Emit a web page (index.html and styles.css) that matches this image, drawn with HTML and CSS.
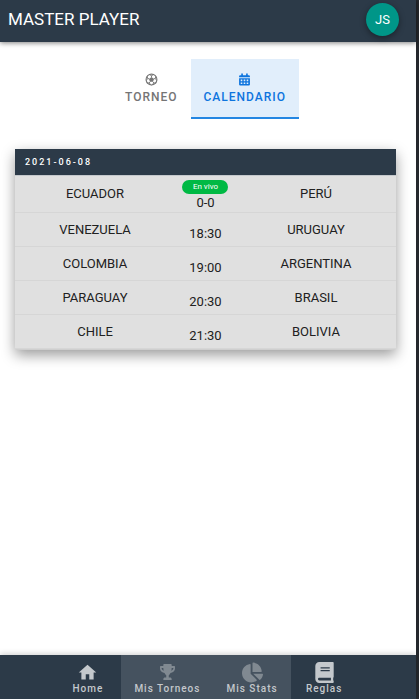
FILE: index.html
```html
<!DOCTYPE html>
<html lang="es">
<head>
<meta charset="utf-8">
<meta name="viewport" content="width=device-width, initial-scale=1">
<title>Master Player</title>
<link rel="stylesheet" href="styles.css">
</head>
<body>
<div class="app">
  <header class="topbar">
    <h1 class="brand">MASTER PLAYER</h1>
    <button class="avatar" type="button">JS</button>
  </header>
  <main class="content">
    <nav class="tabs">
      <a class="tab" href="#torneo">
        <svg class="tab-icon" viewBox="0 0 24 24" aria-hidden="true">
          <circle cx="12" cy="12" r="10" fill="none" stroke="currentColor" stroke-width="2"/>
          <path fill="currentColor" d="M12 7.500l4.600 3.400-1.800 5.400H9.200l-1.800-5.400z"/>
          <path fill="none" stroke="currentColor" stroke-width="1.700" d="M12 8V5M8 2.800L12 5l4-2.200M16 11l3-1M21.700 14L19 10l1-4M14.500 16l2 2.500M12.500 22l4-3.500 4.500-.5M9.500 16l-2 2.500M11.500 22l-4-3.500-4.500-.5M8 11l-3-1M2.300 14L5 10 4 6"/>
        </svg>
        <span>TORNEO</span>
      </a>
      <a class="tab active" href="#calendario">
        <svg class="tab-icon" viewBox="0 0 24 24" aria-hidden="true">
          <path fill="currentColor" fill-rule="evenodd" d="M6 1h3v3h6V1h3v3h2q2 0 2 2v2H2V6q0-2 2-2h2zM2 9.500h20V21q0 2-2 2H4q-2 0-2-2zM5 12v3h3v-3zM10.500 12v3h3v-3zM16 12v3h3v-3zM5 17.500v3h3v-3zM10.500 17.500v3h3v-3zM16 17.500v3h3v-3z"/>
        </svg>
        <span>CALENDARIO</span>
      </a>
    </nav>
    <table class="matches">
      <colgroup><col class="col-team"><col class="col-score"><col class="col-team"></colgroup>
      <thead>
        <tr><th colspan="3">2021-06-08</th></tr>
      </thead>
      <tbody>
        <tr><td>ECUADOR</td><td class="score live"><span class="badge">En vivo</span>0-0</td><td>PERÚ</td></tr>
        <tr><td>VENEZUELA</td><td class="score">18:30</td><td>URUGUAY</td></tr>
        <tr><td>COLOMBIA</td><td class="score">19:00</td><td>ARGENTINA</td></tr>
        <tr><td>PARAGUAY</td><td class="score">20:30</td><td>BRASIL</td></tr>
        <tr><td>CHILE</td><td class="score">21:30</td><td>BOLIVIA</td></tr>
      </tbody>
    </table>
  </main>
  <nav class="bottombar">
    <a class="item" href="#home">
      <svg class="item-icon" viewBox="0 0 24 24" aria-hidden="true"><path d="M10 20v-6h4v6h5v-8h3L12 3 2 12h3v8z"/></svg>
      <span>Home</span>
    </a>
    <a class="item muted" href="#torneos">
      <svg class="item-icon small" viewBox="0 0 576 512" preserveAspectRatio="none" aria-hidden="true"><path d="M552 64H448V24c0-13.300-10.700-24-24-24H152c-13.300 0-24 10.700-24 24v40H24C10.700 64 0 74.700 0 88v56c0 35.700 22.500 72.400 61.900 100.700 31.500 22.700 69.800 37.100 110 41.700C203.300 338.500 240 360 240 360v72h-48c-35.300 0-64 20.700-64 56v12c0 6.600 5.400 12 12 12h296c6.600 0 12-5.400 12-12v-12c0-35.300-28.700-56-64-56h-48v-72s36.700-21.500 68.100-73.600c40.300-4.600 78.600-19 110-41.700 39.300-28.300 61.900-65 61.900-100.700V88c0-13.300-10.700-24-24-24zM99.300 192.800C74.900 175.200 64 155.600 64 144v-16h64.200c1 32.600 5.800 61.200 12.800 86.200-15.100-5.200-29.200-12.400-41.700-21.400zM512 144c0 16.100-17.700 36.100-35.300 48.800-12.500 9-26.700 16.200-41.800 21.400 7-25 11.800-53.600 12.800-86.200H512v16z"/></svg>
      <span>Mis Torneos</span>
    </a>
    <a class="item muted" href="#stats">
      <svg class="item-icon" viewBox="0 0 544 512" aria-hidden="true"><path d="M527.790 288H290.500l158.030 158.030c6.040 6.040 15.980 6.530 22.190.68 38.700-36.460 65.320-85.610 73.130-140.860 1.340-9.460-6.510-17.850-16.060-17.850zm-15.830-64.800C503.720 103.740 408.260 8.280 288.800.04 279.680-.59 272 7.100 272 16.240V240h223.770c9.140 0 16.820-7.680 16.190-16.800zM224 288V50.710c0-9.550-8.390-17.400-17.840-16.060C86.990 51.490-4.100 155.600.14 280.370 4.500 408.510 114.830 513.590 243.030 511.980c50.400-.63 96.970-16.870 135.260-44.030 7.900-5.600 8.420-17.230 1.570-24.080L224 288z"/></svg>
      <span>Mis Stats</span>
    </a>
    <a class="item" href="#reglas">
      <svg class="item-icon" viewBox="0 0 448 512" aria-hidden="true"><path d="M448 360V24c0-13.300-10.700-24-24-24H96C43 0 0 43 0 96v320c0 53 43 96 96 96h328c13.300 0 24-10.700 24-24v-16c0-7.500-3.500-14.300-8.900-18.700-4.200-15.400-4.200-59.300 0-74.700 5.400-4.300 8.900-11.100 8.900-18.600zM128 134c0-3.300 2.700-6 6-6h212c3.300 0 6 2.700 6 6v20c0 3.300-2.700 6-6 6H134c-3.300 0-6-2.700-6-6zm0 64c0-3.300 2.700-6 6-6h212c3.300 0 6 2.700 6 6v20c0 3.300-2.700 6-6 6H134c-3.300 0-6-2.700-6-6zm253.400 250H96c-17.700 0-32-14.300-32-32 0-17.600 14.400-32 32-32h285.400c-1.900 17.100-1.900 46.900 0 64z"/></svg>
      <span>Reglas</span>
    </a>
  </nav>
</div>
</body>
</html>
```

FILE: styles.css
```css
* { box-sizing: border-box; }

body {
  margin: 0;
  font-family: Roboto, "Liberation Sans", sans-serif;
  color: #212121;
}

.app {
  display: flex;
  flex-direction: column;
  min-height: 100vh;
  border-right: 3px solid #25282d;
  background: #fff;
}

.topbar {
  display: flex;
  align-items: center;
  justify-content: space-between;
  height: 42px;
  padding: 0 17px 4px 8px;
  background: #2c3a48;
  box-shadow: 0 1px 5px rgba(0, 0, 0, .5);
}

.brand {
  margin: 0;
  font-size: 17px;
  font-weight: 400;
  color: #fff;
}

.avatar {
  width: 33px;
  height: 33px;
  padding: 0;
  border: 0;
  border-radius: 50%;
  background: #009688;
  color: #fff;
  font: 400 13px Roboto, sans-serif;
  box-shadow: 0 2px 6px rgba(0, 0, 0, .4);
}

.content {
  flex: 1;
  padding: 17px 20px 20px 15px;
}

.tabs {
  display: flex;
  justify-content: center;
  margin-bottom: 30px;
}

.tab {
  display: flex;
  flex-direction: column;
  align-items: center;
  gap: 3px;
  height: 60px;
  padding: 14px 13px 0;
  border-bottom: 2px solid transparent;
  color: #757575;
  font-size: 12px;
  font-weight: 500;
  line-height: 16px;
  letter-spacing: 1px;
  text-decoration: none;
}

.tab.active {
  background: #e1eefb;
  border-color: #2386e2;
  color: #0d74de;
}

.tab-icon {
  width: 13px;
  height: 13px;
}

.matches {
  width: 100%;
  table-layout: fixed;
  border-collapse: separate;
  border-spacing: 0;
  border-bottom: 1px solid #cfcfcf;
  background: #e0e0e0;
  border-radius: 2px;
  box-shadow: 0 5px 14px rgba(0, 0, 0, .4);
}

.col-team { width: 42%; }

.col-score { width: 16%; }

.matches th {
  height: 27px;
  padding: 0 10px;
  border-bottom: 1px solid #c4c8cc;
  background: #2c3a48;
  color: #fff;
  font-size: 9px;
  font-weight: 500;
  letter-spacing: 2px;
  text-align: left;
}

.matches td {
  height: 34px;
  padding: 0;
  border-bottom: 1px solid #d6d6d6;
  font-size: 13px;
  line-height: 16px;
  text-align: center;
}

.matches .score {
  padding-top: 8px;
}

.matches .live {
  height: 37px;
  padding-top: 2px;
}

.badge {
  display: block;
  width: 46px;
  margin: 0 auto 1px;
  border-radius: 7px;
  background: #00b944;
  color: #fff;
  font-size: 8px;
  line-height: 14px;
}

.bottombar {
  display: flex;
  justify-content: center;
  height: 44px;
  padding-right: 4px;
  background: #2c3a48;
  box-shadow: 0 -1px 6px rgba(0, 0, 0, .2);
}

.item {
  display: flex;
  flex-direction: column;
  align-items: center;
  justify-content: flex-end;
  min-width: 67px;
  padding: 0 13px 4px;
  color: #c4c8cc;
  font-size: 10px;
  font-weight: 500;
  line-height: 12px;
  letter-spacing: 1px;
  text-decoration: none;
}

.item.muted {
  background: #45525f;
}

.item-icon {
  width: 21px;
  height: 21px;
  fill: #c4c8cc;
}

.item-icon.small {
  width: 15px;
  height: 16px;
  margin-bottom: 3px;
}

.muted .item-icon {
  fill: #808991;
}
```
